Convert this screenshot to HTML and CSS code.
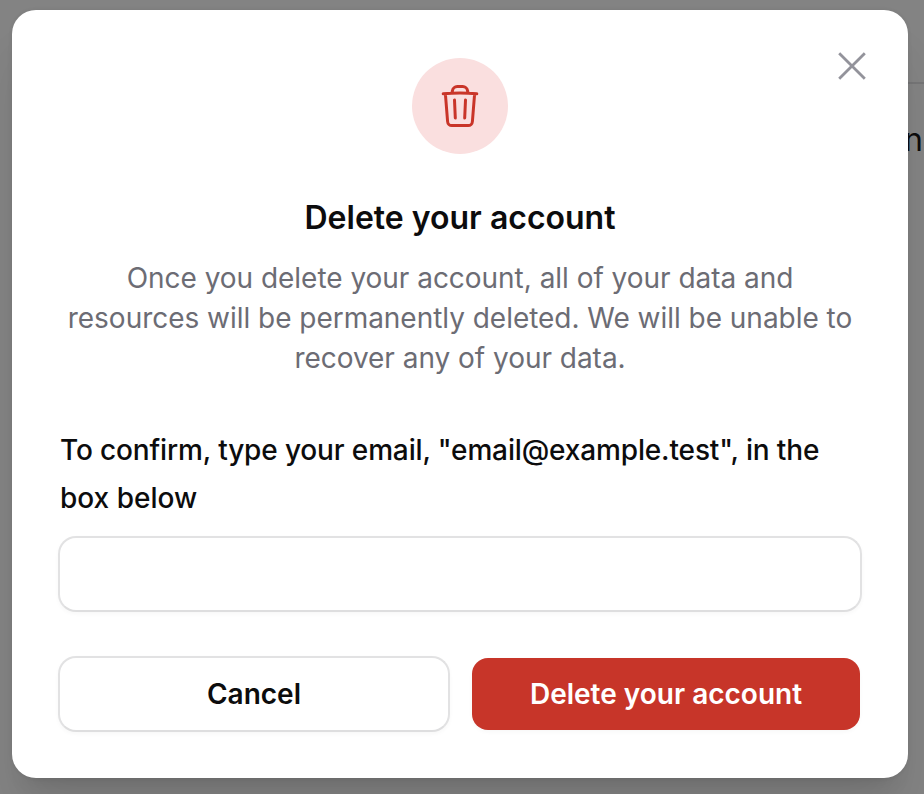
FILE: index.html
```html
<!DOCTYPE html>
<html lang="en">
<head>
<meta charset="utf-8">
<title>Delete your account</title>
<link rel="stylesheet" href="styles.css">
</head>
<body>
<div class="page-rule"></div>
<span class="page-text">n</span>
<main class="modal">
  <button class="close" aria-label="Close">
    <svg width="28" height="28" viewBox="0 0 28 28"><path d="M1.200 1.200l25.600 25.600M26.800 1.200l-25.600 25.600"/></svg>
  </button>
  <div class="badge">
    <svg width="48" height="48" viewBox="0 0 48 48"><path d="M7.200 11.800Q24 10 40.800 11.800M9.400 12l2.200 27.500a4.200 4.200 0 0 0 4.200 4h16.400a4.200 4.200 0 0 0 4.200-4L38.600 12M16 10.500l.4-1.600A5 5 0 0 1 21.300 4.500h5.400a5 5 0 0 1 4.900 4.400l.4 1.600M18.500 18l.8 18M29.500 18l-.8 18"/></svg>
  </div>
  <h1 class="title">Delete your account</h1>
  <p class="description">Once you delete your account, all of your data and<br>resources will be permanently deleted. We will be unable to<br>recover any of your data.</p>
  <label class="label" for="email"><span class="line">To confirm, type your email, "email@example.test", in the</span><br>box below</label>
  <input class="field" id="email" type="text">
  <div class="actions">
    <button class="button cancel">Cancel</button>
    <button class="button danger">Delete your account</button>
  </div>
</main>
</body>
</html>
```
FILE: styles.css
```css
* { box-sizing: border-box; }
body { margin: 0; height: 794px; padding: 10px 16px 16px 12px; overflow: hidden; position: relative; background: #838383; color: #0c0c0d; font-family: Inter, sans-serif; }
.page-rule { position: absolute; right: 0; top: 82px; width: 30px; height: 2px; background: #757576; }
.page-text { position: absolute; left: 904px; top: 120px; font-size: 32px; line-height: 40px; }
.modal { position: relative; display: flex; flex-direction: column; width: 896px; height: 768px; padding: 48px; border-radius: 24px; background: #fff; box-shadow: 0 40px 50px -10px rgba(0,0,0,.1), 0 16px 20px -12px rgba(0,0,0,.1), 0 0 4px rgba(0,0,0,.08); }
.modal > * { flex-shrink: 0; }
.close { position: absolute; top: 42px; right: 42px; width: 28px; height: 28px; padding: 0; border: 0; background: none; }
.close svg, .badge svg { display: block; fill: none; stroke: #93939b; stroke-width: 2.800; }
.badge { display: grid; place-items: center; align-self: center; width: 96px; height: 96px; border-radius: 50%; background: #fadfdf; }
.badge svg { stroke: #c93529; stroke-width: 3; stroke-linecap: round; stroke-linejoin: round; }
.title { margin: 44px 0 0; text-align: center; font-size: 32px; line-height: 40px; font-weight: 600; }
.description { margin: 20px -12px 0; text-align: center; font-size: 28px; line-height: 40px; letter-spacing: -.03px; color: #6c6c74; white-space: nowrap; }
.label { margin-top: 48px; font-size: 28px; line-height: 48px; font-weight: 500; white-space: nowrap; }
.line { letter-spacing: -.14px; }
.field { margin: 14px -2px 0; height: 76px; border: 2px solid #e2e2e3; border-bottom-color: #dededf; border-radius: 18px; background: #fff; box-shadow: 0 2px 4px rgba(0,0,0,.03); }
.actions { display: flex; align-items: center; gap: 22px; margin: 44px 0 0 -2px; }
.button { font: 600 28px/40px Inter, sans-serif; padding: 0; white-space: nowrap; box-shadow: 0 2px 4px rgba(0,0,0,.03); }
.cancel { width: 392px; height: 76px; border: 2px solid #e2e2e3; border-bottom-color: #dededf; border-radius: 18px; background: #fff; color: #0c0c0d; }
.danger { width: 388px; height: 72px; border: 0; border-radius: 16px; background: #c73529; color: #fff; }
```
